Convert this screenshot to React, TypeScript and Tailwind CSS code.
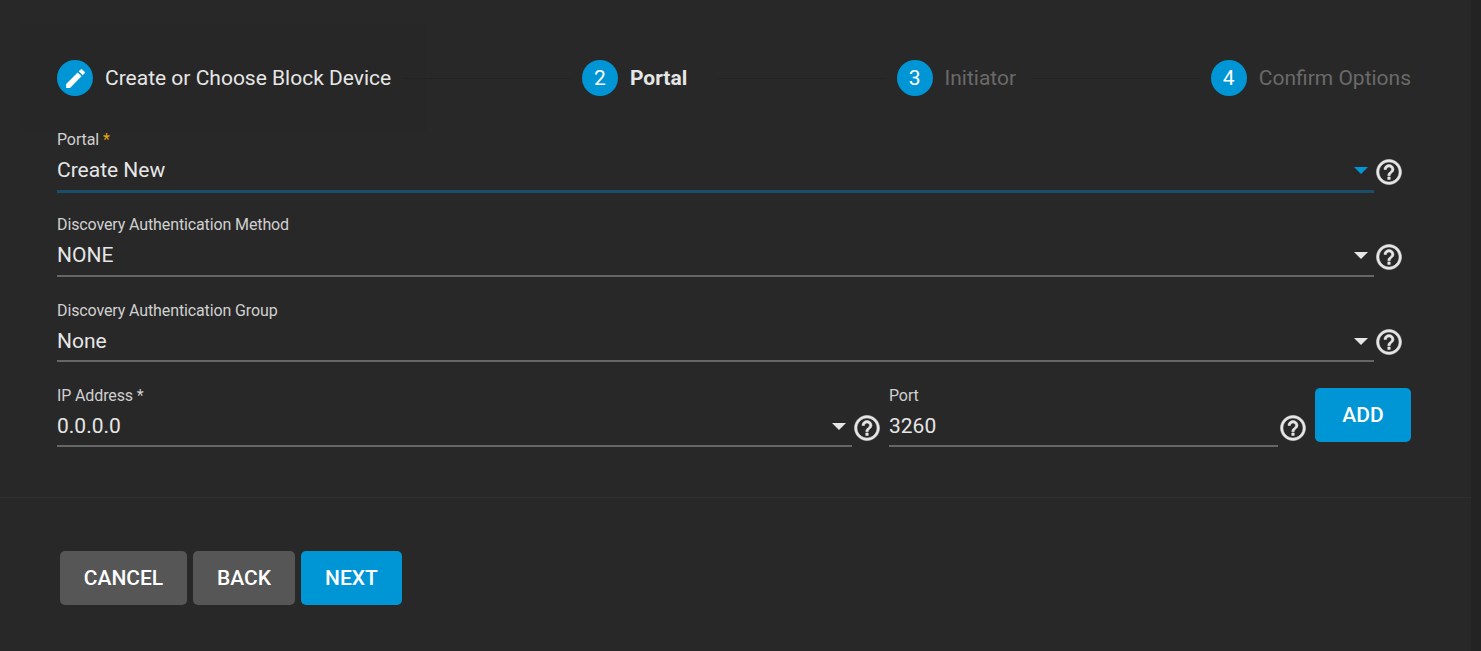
import React from "react";

const font = { fontFamily: "Roboto, sans-serif" };

function Help() {
  return (
    <div className="w-[37px] shrink-0 flex">
      <svg width="30" height="30" viewBox="0 0 24 24" className="shrink-0 mt-[6.6px]" fill="#e6e6e6" stroke="#e6e6e6" strokeWidth="0.4">
        <path d="M11 18h2v-2h-2v2zm1-16C6.48 2 2 6.48 2 12s4.48 10 10 10 10-4.48 10-10S17.52 2 12 2zm0 18c-4.41 0-8-3.59-8-8s3.59-8 8-8 8 3.59 8 8-3.59 8-8 8zm0-14c-2.21 0-4 1.79-4 4h2c0-1.1.9-2 2-2s2 .9 2 2c0 2-3 1.75-3 5h2c0-2.25 3-2.5 3-5 0-2.21-1.79-4-4-4z" />
      </svg>
    </div>
  );
}

function Circle({ n }: { n: string }) {
  return (
    <div className="w-9 h-9 shrink-0 rounded-full bg-[#0095d5] text-white flex items-center justify-center text-[21px]">
      {n === "edit" ? (
        <svg width="25" height="25" viewBox="0 0 24 24" fill="#ffffff">
          <path d="M3 17.25V21h3.75L17.81 9.94l-3.75-3.75L3 17.25zM20.71 7.04a1 1 0 0 0 0-1.41l-2.34-2.34a1 1 0 0 0-1.41 0l-1.83 1.83 3.75 3.75 1.83-1.83z" />
        </svg>
      ) : (
        <span className="mt-[2px]">{n}</span>
      )}
    </div>
  );
}

function Step({ n, label, state }: { n: string; label: string; state: "done" | "active" | "idle" }) {
  const cls =
    state === "active"
      ? "text-[#e6e6e6] font-bold"
      : state === "done"
      ? "text-[#e6e6e6] font-normal"
      : "text-[#6a6a6a] font-normal";
  return (
    <div className="flex items-center gap-3 shrink-0">
      <Circle n={n} />
      <span className={`text-[21px] leading-6 ${cls}`}>{label}</span>
    </div>
  );
}

function Field({ label, required, star, value, focus, select = true }: { label: string; required?: boolean; star?: string; value: string; focus?: boolean; select?: boolean }) {
  return (
    <div className="flex-1 min-w-0">
      <div className="text-base leading-5 text-[#d0d0d0] tracking-[-0.12px]">
        {label}
        {required && <span className={star ?? "text-[#d0d0d0]"}> *</span>}
      </div>
      <div className="flex items-start">
        <div className={`flex-1 min-w-0 flex justify-between pt-[6px] ${focus ? "h-[43px] -mb-[1.6px] border-b-[3px] border-[#1b4f69]" : "h-[41.4px] border-b-2 border-[#666666]"}`}>
          <span className="text-[21px] leading-[29px] text-[#e6e6e6]">{value}</span>
          {select && <span className={`w-0 h-0 mt-[11px] border-x-[7px] border-x-transparent border-t-[7px] mr-[6px] ${focus ? "border-t-[#0095d5]" : "border-t-[#e6e6e6]"}`} />}
        </div>
        <Help />
      </div>
    </div>
  );
}

export default function App() {
  return (
    <div className="w-[1481px] h-[651px] bg-[#282828] flex overflow-hidden" style={font}>
      <div className="w-[1471px] flex flex-col pt-6">
        <div className="flex items-center h-[108px] pl-[57px] pr-[60px]">
          <div className="h-full -ml-[35px] -mr-[36px] pl-[35px] pr-[36px] bg-[#272727] flex items-center">
            <Step n="edit" label="Create or Choose Block Device" state="done" />
          </div>
          <div className="flex-1 h-px bg-[#232323] ml-3 mr-3" />
          <Step n="2" label="Portal" state="active" />
          <div className="flex-1 h-px bg-[#232323] ml-[30.6px] mr-3" />
          <Step n="3" label="Initiator" state="idle" />
          <div className="flex-1 h-px bg-[#232323] ml-4 mr-3" />
          <Step n="4" label="Confirm Options" state="idle" />
        </div>
        <div className="pl-[57px] pr-[60px] flex flex-col gap-[23.93px] -mt-[2px]">
          <Field label="Portal" required star="text-[#e6a800]" value="Create New" focus />
          <Field label="Discovery Authentication Method" value="NONE" />
          <Field label="Discovery Authentication Group" value="None" />
          <div className="flex items-start">
            <div className="w-[832px] shrink-0">
              <Field label="IP Address" required value="0.0.0.0" />
            </div>
            <div className="flex-1">
              <Field label="Port" value="3260" select={false} />
            </div>
            <button className="w-24 h-[54px] mt-[2px] pt-[2px] bg-[#0095d5] text-white font-medium text-[21px] rounded-[5px]">ADD</button>
          </div>
        </div>
        <div className="h-px bg-[#2f2f2f] mt-[49.6px]" />
        <div className="flex gap-[6px] pl-[60px] pt-[53px]">
          <button className="h-[54px] w-[127px] pt-[2px] rounded-[5px] bg-[#565656] text-white font-medium text-[21px]">CANCEL</button>
          <button className="h-[54px] w-[102px] pt-[2px] rounded-[5px] bg-[#565656] text-white font-medium text-[21px]">BACK</button>
          <button className="h-[54px] w-[101px] pt-[2px] rounded-[5px] bg-[#0095d5] text-white font-medium text-[21px]">NEXT</button>
        </div>
      </div>
      <div className="flex-1 bg-[#232323]" />
    </div>
  );
}
